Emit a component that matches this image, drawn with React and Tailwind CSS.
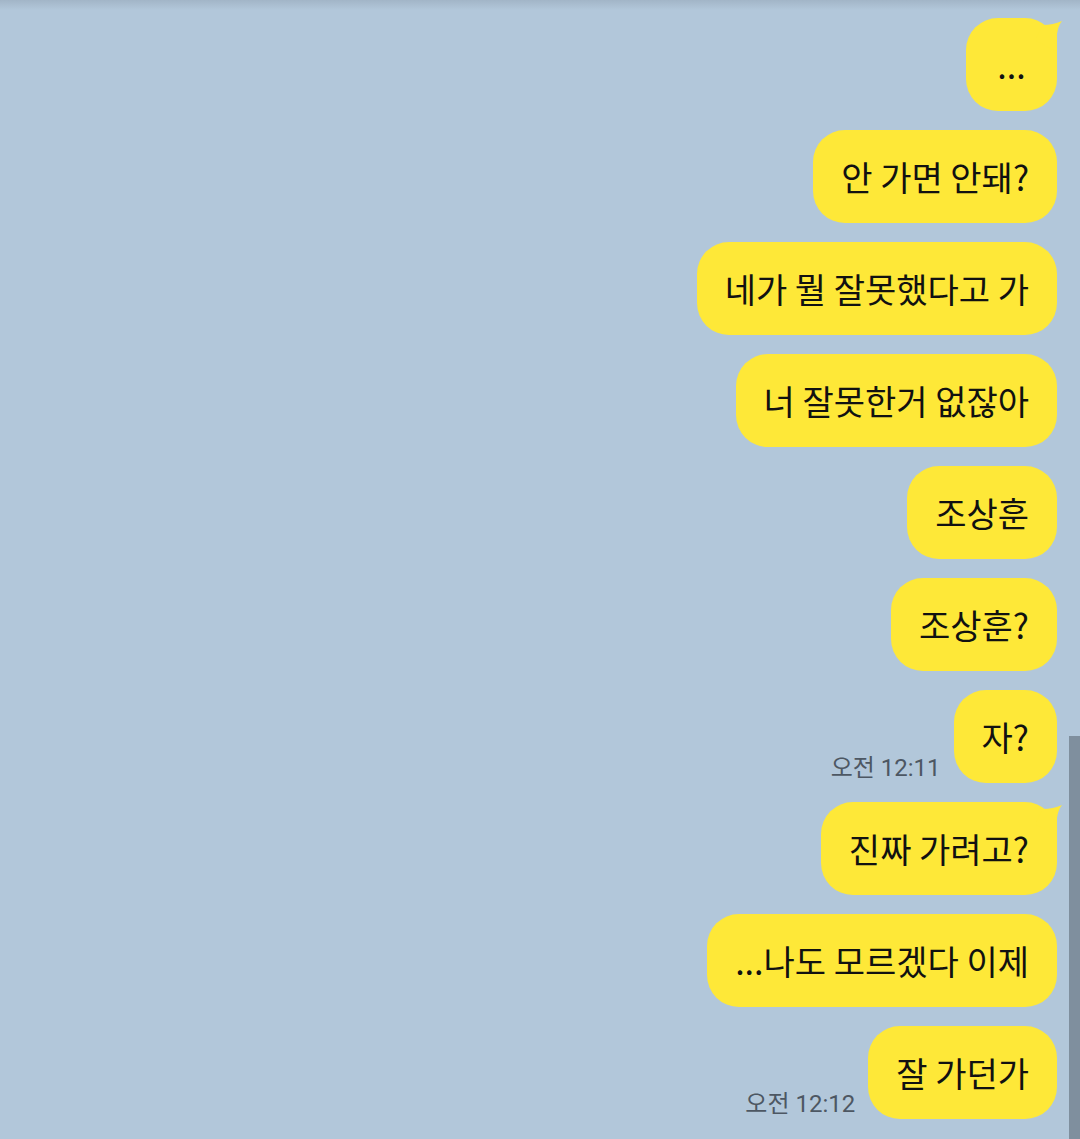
import React from "react";

const Tail = () => (
  <svg
    className="absolute right-[-8px] top-[-2px] w-[40px] h-[40px] overflow-visible"
    viewBox="-32 -2 40 40"
  >
    <path d="M -14 7 Q -4 7 5 3 Q 1 8 0 16 L 0 34 L -22 22 Z" fill="#fee838" />
  </svg>
);

const Bubble = ({ text, tail, time }) => (
  <div className="flex items-end justify-end">
    {time && (
      <div
        className="mr-[13px] mb-[1px] text-[24px] leading-[28px] text-[#4d5763]"
        style={{ fontFamily: 'Roboto, "Noto Sans CJK KR", sans-serif' }}
      >
        {time}
      </div>
    )}
    <div className="relative h-[93px] min-w-[91px] rounded-[32px] bg-[#fee838] px-[28px] flex items-center justify-center text-[34px] text-[#111111] whitespace-nowrap">
      {tail && <Tail />}
      <span className="relative">{text}</span>
    </div>
  </div>
);

export default function App() {
  const msgs = [
    { text: "...", tail: true },
    { text: "안 가면 안돼?" },
    { text: "네가 뭘 잘못했다고 가" },
    { text: "너 잘못한거 없잖아" },
    { text: "조상훈" },
    { text: "조상훈?" },
    { text: "자?", time: "오전 12:11" },
    { text: "진짜 가려고?", tail: true },
    { text: "...나도 모르겠다 이제" },
    { text: "잘 가던가", time: "오전 12:12" },
  ];
  return (
    <div
      className="relative w-[1080px] h-[1139px] overflow-hidden bg-[#b2c7da]"
      style={{ fontFamily: '"Noto Sans CJK KR", "Noto Sans", sans-serif' }}
    >
      <div className="absolute inset-x-0 top-0 h-[10px] bg-gradient-to-b from-[#a2b5c7] to-transparent" />
      <div className="flex flex-col items-end gap-[19px] pt-[18px] pr-[23px]">
        {msgs.map((m, i) => (
          <Bubble key={i} {...m} />
        ))}
      </div>
      <div className="absolute right-0 top-[736px] bottom-0 w-[11px] bg-[#7f8f9e]" />
    </div>
  );
}
